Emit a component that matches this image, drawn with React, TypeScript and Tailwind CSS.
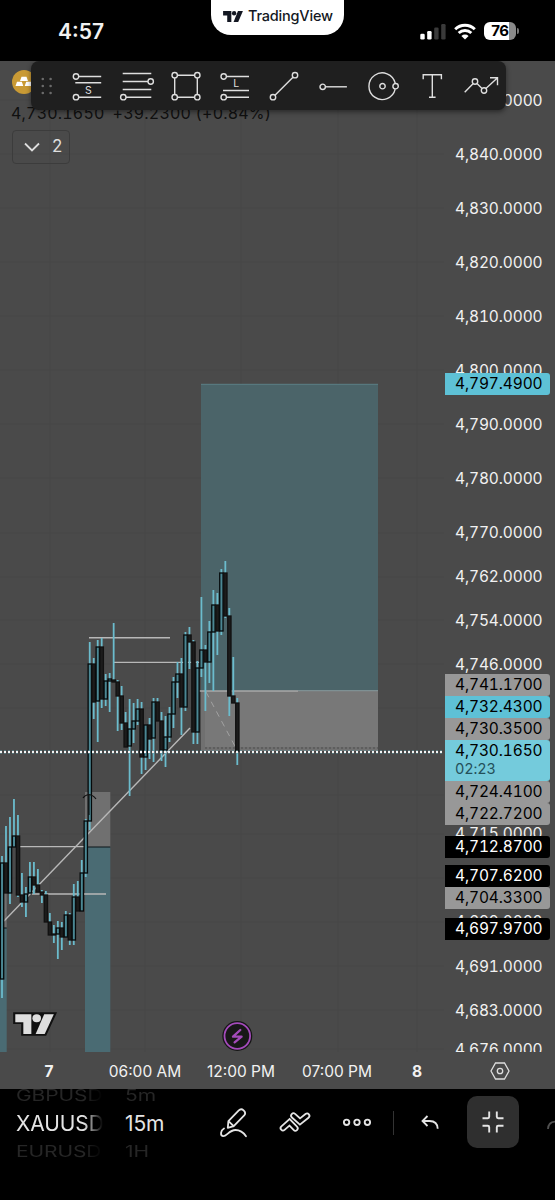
import type { ReactNode } from "react";
import clsx from "clsx";

type Candle = [high: number, top: number, bottom: number, low: number, up: 0 | 1];

const STEP = 3.988;

const candles: Candle[] = [
  [856, 863, 979, 998, 1],
  [826, 863, 893, 893, 0],
  [817, 847, 893, 904, 1],
  [799, 836, 847, 847, 1],
  [815, 836, 895, 897, 0],
  [873, 895, 902, 907, 0],
  [887, 894, 902, 917, 1],
  [862, 877, 893, 894, 1],
  [862, 877, 885, 894, 0],
  [869, 885, 892, 892, 0],
  [890, 892, 895, 903, 0],
  [891, 895, 922, 922, 0],
  [913, 922, 935, 935, 0],
  [925, 934, 935, 943, 0],
  [921, 928, 934, 959, 1],
  [922, 928, 937, 950, 0],
  [911, 915, 937, 937, 1],
  [913, 915, 940, 945, 0],
  [884, 897, 940, 945, 1],
  [881, 897, 911, 911, 0],
  [860, 873, 911, 911, 1],
  [819, 821, 873, 877, 1],
  [642, 664, 821, 830, 1],
  [658, 664, 702, 719, 0],
  [640, 647, 701, 742, 1],
  [638, 647, 699, 708, 0],
  [674, 681, 699, 706, 1],
  [673, 679, 681, 712, 1],
  [623, 680, 682, 682, 0],
  [680, 682, 696, 731, 0],
  [686, 696, 723, 730, 0],
  [712, 723, 747, 747, 0],
  [699, 729, 746, 796, 1],
  [703, 721, 729, 743, 1],
  [699, 709, 721, 725, 1],
  [702, 709, 757, 774, 0],
  [725, 725, 757, 770, 1],
  [718, 725, 739, 759, 0],
  [698, 702, 738, 762, 1],
  [698, 702, 721, 721, 0],
  [712, 721, 750, 761, 0],
  [716, 737, 750, 767, 1],
  [707, 714, 737, 742, 1],
  [677, 682, 714, 728, 1],
  [662, 674, 682, 698, 1],
  [658, 674, 707, 735, 0],
  [632, 635, 707, 711, 1],
  [627, 635, 642, 669, 0],
  [640, 642, 732, 744, 0],
  [661, 668, 732, 744, 1],
  [597, 650, 668, 677, 1],
  [645, 650, 662, 711, 0],
  [621, 632, 662, 683, 1],
  [590, 605, 632, 691, 1],
  [593, 605, 631, 655, 0],
  [569, 573, 631, 635, 1],
  [561, 573, 616, 618, 0],
  [608, 616, 696, 716, 0],
  [657, 696, 703, 703, 0],
  [698, 703, 751, 765, 0],
];

const upperTicks = ["4,850.0000", "4,840.0000", "4,830.0000", "4,820.0000", "4,810.0000", "4,800.0000", "4,790.0000", "4,780.0000", "4,770.0000"];
const middleTicks = ["4,762.0000", "4,754.0000", "4,746.0000"];

const gridRows = [100, 154, 208, 262, 316, 370, 424, 478, 533, 577, 620, 664, 708, 751, 795, 834, 878, 922, 966, 1010, 1049];
const gridCols = [50, 145, 241, 338, 417];

const badges = [
  { text: "4,797.4900", className: "top-[312px] bg-[#5ec1d6] text-black" },
  { text: "4,741.1700", className: "top-[613px] bg-[#989898] text-black" },
  { text: "4,732.4300", className: "top-[635px] bg-[#5ec1d6] text-black" },
  { text: "4,730.3500", className: "top-[657px] bg-[#989898] text-black" },
  { text: "4,724.4100", className: "top-[720px] bg-[#989898] text-black" },
  { text: "4,722.7200", className: "top-[742px] bg-[#989898] text-black" },
  { text: "4,712.8700", className: "top-[775px] bg-black text-white" },
  { text: "4,707.6200", className: "top-[804px] bg-black text-white" },
  { text: "4,704.3300", className: "top-[826px] bg-[#989898] text-black" },
  { text: "4,697.9700", className: "top-[857px] bg-black text-white" },
];

function Icon({ children }: { children: ReactNode }) {
  return (
    <svg
      viewBox="-18 -18 36 36"
      className="h-9 w-9 shrink-0"
      fill="none"
      stroke="#dedede"
      strokeWidth={1.4}
    >
      {children}
    </svg>
  );
}

function LogoShape() {
  return (
    <>
      <path d="M0 0H15V20H7.5V8H0Z" />
      <circle cx="20" cy="4" r="4" />
      <path d="M27 0H36L27.5 20H19Z" />
    </>
  );
}

function StatusBar() {
  return (
    <header className="relative flex h-[61px] shrink-0 items-start justify-between bg-black pr-9 pl-[58px]">
      <span className="mt-5 text-[21px] leading-6 font-semibold">4:57</span>

      <div className="absolute top-0 left-[211px] flex h-[35px] w-[133px] items-center gap-[5px] rounded-b-[20px] bg-white pb-[3px] pl-3 text-[#131722]">
        <svg viewBox="0 0 36 20" className="h-[11px] w-5 shrink-0" fill="#131722">
          <LogoShape />
        </svg>
        <span className="text-[14.5px] font-medium tracking-[-0.2px]">TradingView</span>
      </div>

      <div className="mt-[22px] flex h-[18px] items-center">
        <svg viewBox="0 0 26 17" className="mr-2 h-[17px] w-[26px]">
          <rect x="0.3" y="10.8" width="4.4" height="5.7" rx="1.3" fill="#fff" />
          <rect x="7.2" y="8" width="4.4" height="8.5" rx="1.3" fill="#fff" />
          <rect x="14.2" y="4.5" width="4.4" height="12" rx="1.3" fill="#3a3a3a" />
          <rect x="21.2" y="1" width="4.4" height="15.5" rx="1.3" fill="#3a3a3a" />
        </svg>
        <svg viewBox="0 0 22 17" className="mr-2 h-[17px] w-[22px]" fill="none" stroke="#fff" strokeWidth={2.9}>
          <path d="M1.2 6.3A13.9 13.9 0 0 1 20.8 6.3" />
          <path d="M4.7 10A9 9 0 0 1 17.3 10" />
          <path d="M11 16.6L7.4 12.9A5.2 5.2 0 0 1 14.6 12.9Z" fill="#fff" stroke="none" />
        </svg>
        <div className="flex h-[18px] w-[32px] items-center justify-center rounded-[6px] bg-[linear-gradient(90deg,#fff_78%,#8a8a8a_78%)] text-[15px] font-bold tracking-[-0.4px] text-black">
          76
        </div>
        <div className="ml-[1px] h-[6px] w-[2px] rounded-r-full bg-[#777]" />
      </div>
    </header>
  );
}

function DrawingToolbar() {
  return (
    <div className="absolute top-0 left-[31px] flex h-[49px] w-[475px] items-center rounded-lg bg-[#1f1f1f] pl-[10px] shadow-[0_2px_5px_rgba(0,0,0,0.45)]">
      <svg viewBox="0 0 12 18" className="mr-[17px] h-[18px] w-3 shrink-0" fill="#6b6b6b">
        {[2, 9, 16].map((y) => (
          <g key={y}>
            <circle cx="1.8" cy={y} r="1.3" />
            <circle cx="9.6" cy={y} r="1.3" />
          </g>
        ))}
      </svg>
      <div className="flex gap-[13.1px]">
        <Icon>
          <circle cx="-12" cy="-9.5" r="2.7" />
          <path d="M-9.3 -9.5H13.2M-12.7 -3.2H13.2M-9.3 11.2H13.2" />
          <circle cx="-12" cy="11.2" r="2.7" />
          <text x="0.3" y="7.6" textAnchor="middle" fontSize="10.5" fill="#dedede" stroke="none">S</text>
        </Icon>
        <Icon>
          <path d="M-14.3 -12.5H14.3M-14.3 -4.5H11M-14.3 3.5H14.3M-11 11.2H14.3" />
          <circle cx="13.7" cy="-4.5" r="2.7" />
          <circle cx="-13.7" cy="11.2" r="2.7" />
        </Icon>
        <Icon>
          <path d="M-8.6 -10.8H8.6M-8.6 11.2H8.6M-11.3 -8.1V8.5M11.3 -8.1V8.5" />
          <circle cx="-11.3" cy="-10.8" r="2.7" />
          <circle cx="11.3" cy="-10.8" r="2.7" />
          <circle cx="-11.3" cy="11.2" r="2.7" />
          <circle cx="11.3" cy="11.2" r="2.7" />
        </Icon>
        <Icon>
          <circle cx="-11.3" cy="-9.5" r="2.7" />
          <path d="M-8.6 -9.5H14M-12 4.5H14M-8.6 11.2H14" />
          <circle cx="-11.3" cy="11.2" r="2.7" />
          <text x="1.2" y="1.2" textAnchor="middle" fontSize="10.5" fill="#dedede" stroke="none">L</text>
        </Icon>
        <Icon>
          <circle cx="-11" cy="11.2" r="2.7" />
          <circle cx="11" cy="-10.8" r="2.7" />
          <path d="M-9 9.2L9 -8.8" />
        </Icon>
        <Icon>
          <circle cx="-10.3" cy="0.8" r="2.7" />
          <path d="M-7.6 0.8H13.9" />
        </Icon>
        <Icon>
          <path d="M12.2 -2.8A13.3 13.3 0 1 0 12.2 3.2" />
          <circle cx="-0.5" cy="0.2" r="2.7" />
          <circle cx="12.6" cy="0.2" r="2.7" />
        </Icon>
        <Icon>
          <path d="M-8.8 -6.8V-11.2H9.4V-6.8M0.3 -11.2V11.2M-3 11.2H3.6" />
        </Icon>
        <Icon>
          <path d="M-16.3 6.2L-8 -2.3M-4 -2.6L1 2.4M4.9 2.6L16.3 -8M9 -8.2H16.5V-0.8" />
          <circle cx="-6" cy="-4.5" r="2.7" />
          <circle cx="3" cy="4.5" r="2.7" />
        </Icon>
      </div>
    </div>
  );
}

function Chart() {
  return (
    <svg viewBox="0 61 444 991" className="h-[991px] w-[444px] shrink-0">
      <g stroke="#474747">
        {gridRows.map((y) => (
          <line key={y} x1="0" x2="444" y1={y} y2={y} />
        ))}
        {gridCols.map((x) => (
          <line key={x} x1={x} x2={x} y1="61" y2="1052" />
        ))}
      </g>

      {/* position boxes */}
      <rect x="201" y="384" width="177" height="307" fill="#4b6469" />
      <path d="M201 384.3H378" stroke="#5a7d84" />
      <rect x="201" y="691" width="177" height="60" fill="#707070" />
      <rect x="205" y="691" width="173" height="56" fill="#787878" />
      <rect x="85" y="792" width="25.3" height="55" fill="#707070" />
      <rect x="85" y="847" width="25.3" height="205" fill="#4a6b73" />
      <rect x="0" y="893" width="6.7" height="35" fill="#707070" />
      <rect x="0" y="928" width="6.7" height="124" fill="#4a6b73" />
      <path d="M85 847H110.3M0 928H6.7" stroke="#0b1518" strokeWidth="1.2" />

      <g stroke="#b8b8b8" strokeWidth="1.4" fill="none">
        <path d="M89 637.8H170M113 662.4H202M20 846.6H85M32 894H106" />
        <path d="M193 691H298" stroke="#a8a8a8" />
        <path d="M298 690.7H378" stroke="#8a9a9d" strokeWidth="1" />
        <path d="M4 921L190 728" />
        <path d="M206 692L237 750" stroke="#a2a2a2" strokeDasharray="6 5" strokeWidth="1" />
      </g>
      <path d="M205 748H378" stroke="#4d4d4d" strokeDasharray="2 2" strokeWidth="1.2" />

      {candles.map(([high, top, bottom, low, up], i) => {
        const x = 2 + i * STEP;
        return (
          <g key={i}>
            <line x1={x} x2={x} y1={high} y2={low} stroke="#6bbccd" strokeWidth="1.8" />
            <rect
              x={x - 1.6}
              y={top}
              width="3.3"
              height={Math.max(bottom - top, 1)}
              fill={up ? "#4b8793" : "#1c1c1c"}
              stroke={up ? "#05090a" : "#111"}
              strokeWidth="1.3"
            />
          </g>
        );
      })}

      <path d="M83 798Q85 795 89 794.5Q93 795 96 799M89 794.5V815" fill="none" stroke="#111" strokeWidth="1.2" />

      <path d="M0 752H442" stroke="#5f9aa6" strokeWidth="3" strokeDasharray="2 2" />
      <path d="M0 752H442" stroke="#f4f4f4" strokeWidth="2" strokeDasharray="2 2" />

      <g transform="translate(15.3 1014.3) scale(1.07 .98)" fill="#dedede" stroke="#111" strokeWidth="4" paintOrder="stroke">
        <path d="M0 0H36L27.5 20H7.5V8H0Z" fill="#111" />
        <g stroke="none">
          <LogoShape />
        </g>
      </g>

      <circle cx="237.3" cy="1036" r="15" fill="#151515" />
      <circle cx="237.3" cy="1036" r="12.8" fill="#181818" stroke="#a44bbb" strokeWidth="1.8" />
      <path d="M240.3 1030L233 1036.7H241.6L234.6 1042.3" fill="none" stroke="#a44bbb" strokeWidth="2.3" strokeLinejoin="round" strokeLinecap="round" />
    </svg>
  );
}

function PriceAxis() {
  return (
    <div className="relative h-[991px] w-[111px] shrink-0 overflow-hidden text-[15.5px] tracking-[-0.12px] tabular-nums">
      <div className="flex flex-col pt-[12.4px] pl-[11px] leading-none">
        {upperTicks.map((tick) => (
          <span key={tick} className="flex h-[54.1px] shrink-0 items-center">{tick}</span>
        ))}
        <div className="-mt-[5.2px] flex flex-col">
          {middleTicks.map((tick) => (
            <span key={tick} className="flex h-[43.7px] shrink-0 items-center">{tick}</span>
          ))}
        </div>
        <span className="mt-[140px] leading-4">4,715.0000</span>
        <span className="mt-[72px] leading-4">4,699.0000</span>
        <span className="mt-[29px] leading-4">4,691.0000</span>
        <span className="mt-[28px] leading-4">4,683.0000</span>
        <span className="mt-[23px] leading-4">4,676.0000</span>
      </div>

      {badges.map(({ text, className }) => (
        <div key={text} className={clsx("absolute left-[1px] flex h-[22px] w-[105px] items-center rounded-r-[3px] pl-[10px] leading-none", className)}>
          {text}
        </div>
      ))}
      <div className="absolute top-[679px] left-[1px] flex h-[41px] w-[105px] flex-col justify-center rounded-r-[3px] bg-[#74cbdc] pb-[2px] pl-[10px] leading-[18px] text-black">
        <span>4,730.1650</span>
        <span className="text-[14.5px] text-[#24505a]">02:23</span>
      </div>
    </div>
  );
}

function TimeAxis() {
  return (
    <div className="flex h-[37px] shrink-0 items-center pt-[2px] pl-[1px] text-center text-[15.5px]">
      <span className="w-24 font-bold">7</span>
      <span className="w-24">06:00 AM</span>
      <span className="w-24">12:00 PM</span>
      <span className="w-24">07:00 PM</span>
      <span className="w-16 font-bold">8</span>
      <svg viewBox="0 0 20 18" className="-mt-[1px] ml-[41px] h-[18px] w-5" fill="none" stroke="#dedede" strokeWidth={1.3}>
        <path d="M5.5 1H14.5L19 9L14.5 17H5.5L1 9Z" />
        <circle cx="10" cy="9" r="2.7" />
      </svg>
    </div>
  );
}

function BottomBar() {
  return (
    <footer className="flex h-[111px] shrink-0 overflow-hidden bg-black text-[21px] leading-[28px] tracking-[-0.1px]">
      <div className="-mt-[7px] ml-4 flex w-[87px] flex-col overflow-hidden [mask-image:linear-gradient(90deg,#000_78%,transparent)]">
        <span className="scale-y-75 text-[#262626]">GBPUSD</span>
        <span className="text-[#e4e4e4]">XAUUSD</span>
        <span className="scale-y-75 text-[#262626]">EURUSD</span>
      </div>
      <div className="-mt-[7px] ml-[22px] flex w-[93px] flex-col">
        <span className="scale-y-75 text-[#262626]">5m</span>
        <span className="text-[#e4e4e4]">15m</span>
        <span className="scale-y-75 text-[#262626]">1H</span>
      </div>

      <div className="flex h-[67px] items-center">
        <svg viewBox="-18 -18 36 36" className="-ml-[2px] h-9 w-9" fill="none" stroke="#e4e4e4" strokeWidth={1.8} strokeLinejoin="round" strokeLinecap="round">
          <path d="M-6.2 4.8L-5.6 -1.8L4.8 -12.6Q7 -15 9.6 -12.7Q12.4 -10.1 10.2 -7.7L-.3 3.2ZM-5.5 -1.8L-.3 3.2" />
          <path d="M-10 5.5C-13.5 7.5 -14 12.5 -11 13.2C-7.5 13.8 -5 7 1.5 7C6.5 7 9.5 9.5 12 13.3" />
        </svg>
        <svg viewBox="-18 -18 36 36" className="ml-[24.7px] h-9 w-9" fill="none" strokeLinejoin="miter" strokeLinecap="round">
          <path d="M-12 5.1L-5.5 -.7L.3 5.3M-1.5 -7.3L5 -1.5L12 -7.1" stroke="#e4e4e4" strokeWidth="6.6" />
          <path d="M-12 5.1L-5.5 -.7L.3 5.3M-1.5 -7.3L5 -1.5L12 -7.1" stroke="#000" strokeWidth="3" />
        </svg>
        <svg viewBox="-18 -18 36 36" className="ml-[26px] h-9 w-9" fill="none" stroke="#e4e4e4" strokeWidth={1.9}>
          <circle cx="-10.4" cy="-.7" r="2.7" />
          <circle cx="0" cy="-.7" r="2.7" />
          <circle cx="10.4" cy="-.7" r="2.7" />
        </svg>
        <div className="ml-[18.5px] h-6 w-px bg-[#333]" />
        <svg viewBox="-18 -18 36 36" className="ml-[17.5px] h-9 w-9" fill="none" stroke="#e4e4e4" strokeWidth={1.8}>
          <path d="M-2.5 -7L-7.5 -2L-2.5 3M-7.3 -2H-.5Q7.5 -2 7.7 5.8" />
        </svg>
        <div className="-mt-[1px] ml-[19px] flex h-[52px] w-[52px] items-center justify-center rounded-[10px] bg-[#2f2f2f]">
          <svg viewBox="-12 -12 24 24" className="h-6 w-6" fill="none" stroke="#e4e4e4" strokeWidth={1.9}>
            <path d="M-3.8 -10.5V-5.2Q-3.8 -3.8 -5.2 -3.8H-10.5M3.8 -10.5V-5.2Q3.8 -3.8 5.2 -3.8H10.5M-3.8 10.5V5.2Q-3.8 3.8 -5.2 3.8H-10.5M3.8 10.5V5.2Q3.8 3.8 5.2 3.8H10.5" />
          </svg>
        </div>
        <svg viewBox="0 0 8 20" className="ml-7 h-5 w-2" fill="none" stroke="#505050" strokeWidth={1.8}>
          <path d="M1 16Q1.2 8.5 9 8.5" />
        </svg>
      </div>
    </footer>
  );
}

export default function App() {
  return (
    <div className="flex h-[1200px] w-[555px] flex-col overflow-hidden bg-black font-['Inter',sans-serif] text-[#f1f1f1]">
      <StatusBar />
      <main className="relative flex h-[1028px] shrink-0 flex-col bg-[#4a4a4a]">
        <div className="flex">
          <Chart />
          <PriceAxis />
        </div>
        <TimeAxis />

        <div className="absolute top-[9px] left-3 flex flex-col items-start">
          <svg viewBox="0 0 24 24" className="h-6 w-6">
            <circle cx="12" cy="12" r="12" fill="#c99a35" />
            <path d="M9.5 6.8H14.5L16 11H8ZM5 11.8H9.8L11.3 16H3.5ZM14.2 11.8H19L20.5 16H12.7Z" fill="#fff" />
          </svg>
          <div className="mt-[7px] -ml-[1px] flex gap-[8px] text-[16px] leading-6 tracking-[0.2px] text-[#101010] tabular-nums">
            <span>4,730.1650</span>
            <span>+39.2300 (+0.84%)</span>
          </div>
          <div className="mt-[5px] flex h-[34px] w-[58px] items-center gap-3 rounded border border-[#3c3c3c] pl-[11px] text-[17px] text-[#dedede]">
            <svg viewBox="0 0 16 10" className="h-[10px] w-4" fill="none" stroke="#dedede" strokeWidth={1.8}>
              <path d="M1 1.5L8 8.5L15 1.5" />
            </svg>
            2
          </div>
        </div>
        <DrawingToolbar />
      </main>
      <BottomBar />
    </div>
  );
}
